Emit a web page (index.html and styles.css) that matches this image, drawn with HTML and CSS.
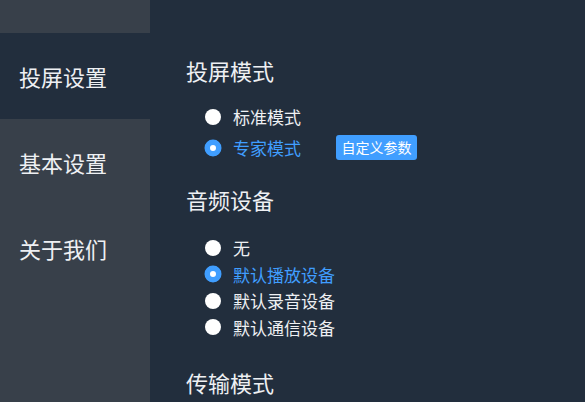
FILE: index.html
```html
<!DOCTYPE html>
<html lang="zh-CN">
<head>
    <meta charset="UTF-8">
    <meta name="viewport" content="width=device-width, initial-scale=1.0">
    <title>设置</title>
    <link rel="stylesheet" href="styles.css">
</head>
<body>
    <div class="app">
        <div class="sidebar">
            <div class="sidebar-top"></div>
            <div class="nav-item active">投屏设置</div>
            <div class="nav-item">基本设置</div>
            <div class="nav-item">关于我们</div>
        </div>
        <div class="main">
            <h2 class="section-title">投屏模式</h2>
            <div class="radio-group">
                <div class="radio-row">
                    <span class="radio"></span>
                    <span class="radio-label">标准模式</span>
                </div>
                <div class="radio-row checked">
                    <span class="radio"></span>
                    <span class="radio-label">专家模式</span>
                    <button class="btn-custom">自定义参数</button>
                </div>
            </div>

            <h2 class="section-title mid">音频设备</h2>
            <div class="device-list">
                <div class="radio-row small">
                    <span class="radio"></span>
                    <span class="radio-label">无</span>
                </div>
                <div class="radio-row small checked">
                    <span class="radio"></span>
                    <span class="radio-label">默认播放设备</span>
                </div>
                <div class="radio-row small">
                    <span class="radio"></span>
                    <span class="radio-label">默认录音设备</span>
                </div>
                <div class="radio-row small">
                    <span class="radio"></span>
                    <span class="radio-label">默认通信设备</span>
                </div>
                <div class="radio-row small">
                    <span class="radio"></span>
                    <span class="radio-label">扬声器</span>
                </div>
            </div>

            <h2 class="section-title mid">传输模式</h2>
        </div>
    </div>
</body>
</html>
```

FILE: styles.css
```css
html, body {
    margin: 0;
    padding: 0;
    height: 100%;
    overflow: hidden;
}
body {
    font-family: "Noto Sans CJK SC", "Microsoft YaHei", sans-serif;
    background: #222e3d;
    color: #eef0f3;
}
.app {
    display: flex;
    height: 100%;
}
.sidebar {
    width: 150px;
    flex-shrink: 0;
    background: #38404a;
}
.sidebar-top {
    height: 33px;
}
.nav-item {
    height: 86px;
    line-height: 86px;
    padding-left: 19px;
    font-size: 22px;
    color: #eef0f3;
}
.nav-item.active {
    background: #222e3d;
}
.main {
    flex: 1;
    padding: 55px 0 0 36px;
}
.section-title {
    margin: 0;
    font-size: 22px;
    font-weight: normal;
    line-height: 30px;
}
.section-title.mid {
    margin-top: 21px;
}
.radio-group {
    margin-top: 16px;
    padding-left: 19px;
}
.radio-row {
    display: flex;
    align-items: center;
    height: 31px;
    font-size: 17px;
}
.radio-row.small {
    height: 26.5px;
}
.radio {
    width: 16px;
    height: 16px;
    border-radius: 50%;
    background: #fff;
    box-sizing: border-box;
    margin-right: 12px;
    flex-shrink: 0;
}
.radio-row.checked .radio {
    border: 5.5px solid #409eff;
    box-shadow: 0 0 0 0.5px #409eff;
}
.radio-row.checked .radio-label {
    color: #409eff;
}
.btn-custom {
    margin-left: 35px;
    height: 25px;
    padding: 0 5.5px;
    border: none;
    border-radius: 3px;
    background: #409eff;
    color: #fff;
    font-family: inherit;
    font-size: 14px;
    line-height: 25px;
}
.device-list {
    margin-top: 10px;
    margin-bottom: 1px;
    padding-top: 10.5px;
    padding-left: 19px;
    box-sizing: border-box;
    height: 122px;
    overflow: hidden;
}
```
